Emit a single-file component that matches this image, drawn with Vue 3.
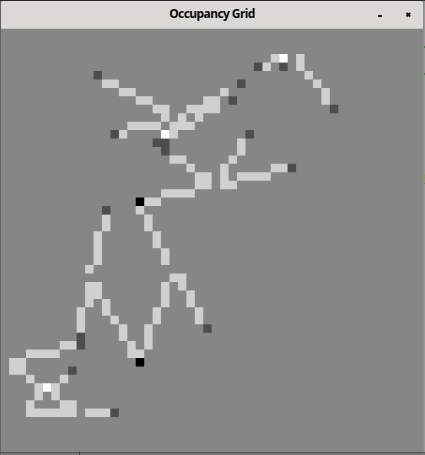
<script setup>
// Each run is [row, first column, last column]; the map is 50 x 50 cells.
const free = [
  [3,32,32],[3,35,35],[4,31,31],[4,35,35],[5,36,36],[6,12,13],[6,37,37],
  [7,14,15],[7,26,26],[7,38,38],[8,16,17],[8,24,25],[8,38,38],[9,18,19],[9,22,25],
  [10,19,19],[10,21,21],[10,23,23],[11,15,18],[11,20,22],[12,14,14],[12,20,20],
  [13,28,28],[14,28,28],[15,20,21],[15,27,27],[16,22,22],[16,26,26],[16,32,33],
  [17,23,24],[17,26,26],[17,28,31],[18,23,24],[18,26,27],[19,19,22],[20,17,18],
  [21,16,16],[22,12,12],[22,17,17],[23,12,12],[23,17,17],[24,11,11],[24,18,18],
  [25,11,11],[25,18,18],[26,11,11],[26,19,19],[27,11,11],[27,19,19],[28,10,10],
  [29,20,21],[30,10,11],[30,19,19],[30,21,21],[31,10,11],[31,19,19],[31,22,22],
  [32,10,10],[32,12,12],[32,19,19],[32,22,22],[33,9,9],[33,12,12],[33,18,18],[33,23,23],
  [34,9,9],[34,13,13],[34,18,18],[34,23,23],[35,9,9],[35,14,14],[35,17,17],
  [36,14,14],[36,17,17],[37,7,8],[37,15,15],[37,17,17],[38,3,6],[38,15,16],
  [39,1,2],[40,1,2],[41,3,3],[41,7,7],[42,4,4],[42,6,6],[43,4,4],[43,6,6],
  [44,3,3],[44,7,8],[45,3,8],[45,10,12],
]
const occupied = [
  [4,30,30],[4,33,33],[5,11,11],[6,28,28],[8,27,27],[9,39,39],[12,13,13],[12,29,29],
  [13,18,19],[14,19,19],[16,34,34],[21,12,12],[35,24,24],[36,9,9],[37,9,9],
  [40,8,8],[45,13,13],
]
const clear = [[3,33,33],[12,19,19],[42,5,5]]
const solid = [[20,16,16],[39,16,16]]

const outline = (runs) => runs.map(([r, a, b]) => `M${a} ${r}H${b + 1}V${r + 1}H${a}Z`).join('')
const layers = [
  { name: 'free', d: outline(free) },
  { name: 'occupied', d: outline(occupied) },
  { name: 'clear', d: outline(clear) },
  { name: 'solid', d: outline(solid) },
]
</script>

<template>
  <div class="desktop">
    <div class="window">
      <header class="titlebar">
        <h1 class="title">Occupancy Grid</h1>
        <div class="controls">
          <svg class="icon" viewBox="0 0 6 6"><path d="M1.1 4H4.8V6H1.1Z" /></svg>
          <svg class="icon" viewBox="0 0 6 6"><path class="cross" d="M1.5 1.8L5.2 5.5M5.2 1.8L1.5 5.5" /></svg>
        </div>
      </header>
      <svg class="map" viewBox="0 0 422.4 423">
        <g transform="translate(-0.3 -0.2) scale(8.44)">
          <path v-for="layer in layers" :key="layer.name" :class="layer.name" :d="layer.d" />
        </g>
      </svg>
    </div>
    <div class="edge"><i class="mark green"></i><i class="mark green second"></i><i class="mark olive"></i></div>
    <div class="shadow"><i class="tick"></i></div>
  </div>
</template>

<style>
body { margin: 0; overflow: hidden; }
</style>

<style scoped>
.desktop {
  box-sizing: border-box;
  width: 425px;
  height: 455px;
  padding: 1px 0 0 1px;
  display: grid;
  grid-template: 451px 3px / 422px 2px;
  background: #626262;
  box-shadow: inset 0 1px #29292b;
}
.window { display: flex; flex-direction: column; background: #868686; }
.titlebar {
  box-sizing: border-box;
  height: 28px;
  flex: none;
  display: grid;
  grid-template-columns: 1fr auto 1fr;
  background: #dbd9d6;
  border-bottom: 1px solid #c7c5c2;
  border-radius: 2px 2px 0 0;
}
.title {
  grid-column: 2;
  margin: 0;
  font: 700 12px/25px "Noto Sans", "Open Sans", sans-serif;
  letter-spacing: -0.57px;
  color: #080808;
  white-space: nowrap;
}
.controls {
  display: flex;
  justify-content: flex-end;
  align-items: flex-start;
  gap: 22px;
  padding: 10px 12px 0 0;
}
.icon { width: 6px; height: 6px; fill: #111; overflow: visible; }
.cross { fill: none; stroke: #111; stroke-width: 1.9; }
.map { display: block; width: 422.4px; height: 423px; }
.free { fill: #d0d0d0; }
.occupied { fill: #4d4d4d; }
.clear { fill: #fff; }
.solid { fill: #000; }
.edge { display: flex; flex-direction: column; background: linear-gradient(90deg, #858585, #a0a0a0); }
.mark { width: 1px; height: 2px; margin: 45px 0 0 1px; background: #4d7a4b; }
.second { margin-top: 25px; }
.olive { height: 9px; margin-top: 99px; background: #969960; border-bottom: 1px solid #5c8960; }
.shadow {
  grid-column: 1 / 3;
  display: flex;
  background: linear-gradient(180deg, #535353, #8b8b8b);
}
.tick { width: 1px; margin-left: 78px; background: #3c3c3c; }
</style>
